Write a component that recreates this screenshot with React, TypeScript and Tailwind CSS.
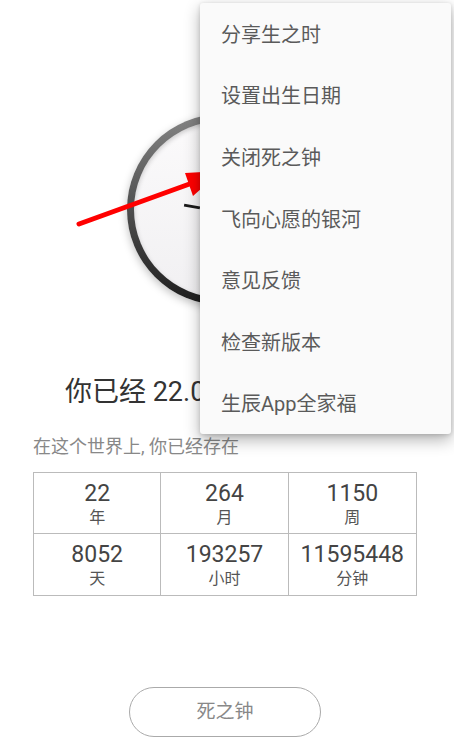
import React from "react";

const font = { fontFamily: "Roboto, 'Noto Sans CJK SC', sans-serif" };

const stats = [
  ["22", "年"],
  ["264", "月"],
  ["1150", "周"],
  ["8052", "天"],
  ["193257", "小时"],
  ["11595448", "分钟"],
];

const menu = [
  "分享生之时",
  "设置出生日期",
  "关闭死之钟",
  "飞向心愿的银河",
  "意见反馈",
  "检查新版本",
  "生辰App全家福",
];

export default function App() {
  return (
    <div className="relative w-[454px] h-[745px] bg-white overflow-hidden" style={font}>
      <div className="flex flex-col">
        <div className="pt-[114px] pl-[127px]">
          <div className="relative w-[191px] h-[191px] rounded-full bg-gradient-to-b from-[#858585] to-[#1e1e1e] p-[7px] shadow-[0_3px_8px_rgba(0,0,0,0.25)]">
            <div className="w-full h-full rounded-full bg-gradient-to-b from-[#fbfafb] to-[#f1f0f2] shadow-[inset_0_2px_5px_rgba(0,0,0,0.2)]" />
            <div className="absolute left-[57px] top-[91px] w-[16px] h-[3px] bg-[#1a1a1a] rotate-[10deg]" />
          </div>
        </div>
        <div className="mt-[71px] pl-[65px] text-[27px] leading-[32px] text-[#333] whitespace-nowrap">
          你已经 22.0
        </div>
        <div className="mt-[29px] pl-[33px] text-[18px] leading-[20px] text-[#888]">
          在这个世界上, 你已经存在
        </div>
        <div className="mt-[15px] ml-[33px] w-[384px] grid grid-cols-3 border border-[#bbb]">
          {stats.map(([n, l], i) => (
            <div
              key={i}
              className={`h-[61px] flex flex-col items-center pt-[9px] ${i % 3 !== 2 ? "border-r border-[#bbb]" : ""} ${i < 3 ? "border-b border-[#bbb]" : ""}`}
            >
              <div className="text-[23px] leading-[24px] text-[#444]">{n}</div>
              <div className="mt-[1px] text-[16px] leading-[22px] text-[#555]">{l}</div>
            </div>
          ))}
        </div>
        <div className="mt-[91px] flex justify-center pr-[4px]">
          <div className="w-[192px] h-[50px] rounded-full border border-[#aaa] flex items-center justify-center text-[19px] text-[#888]">
            死之钟
          </div>
        </div>
      </div>

      <svg className="absolute left-0 top-0 pointer-events-none" width="454" height="745">
        <line x1="79" y1="224" x2="195" y2="182" stroke="#ff0000" strokeWidth="5" strokeLinecap="round" />
        <polygon points="221,171 185,173 193,196" fill="#ff0000" />
      </svg>

      <div className="absolute left-[200px] top-[3px] w-[251px] h-[431px] bg-[#fafafa] rounded-[3px] shadow-[0_6px_16px_rgba(0,0,0,0.3),0_1px_4px_rgba(0,0,0,0.15)] flex flex-col">
        <div className="pt-[1px]">
          {menu.map((m) => (
            <div key={m} className="h-[61.6px] flex items-center pl-[21px] text-[20px] text-[#5a5a5a]">
              {m}
            </div>
          ))}
        </div>
      </div>
    </div>
  );
}
